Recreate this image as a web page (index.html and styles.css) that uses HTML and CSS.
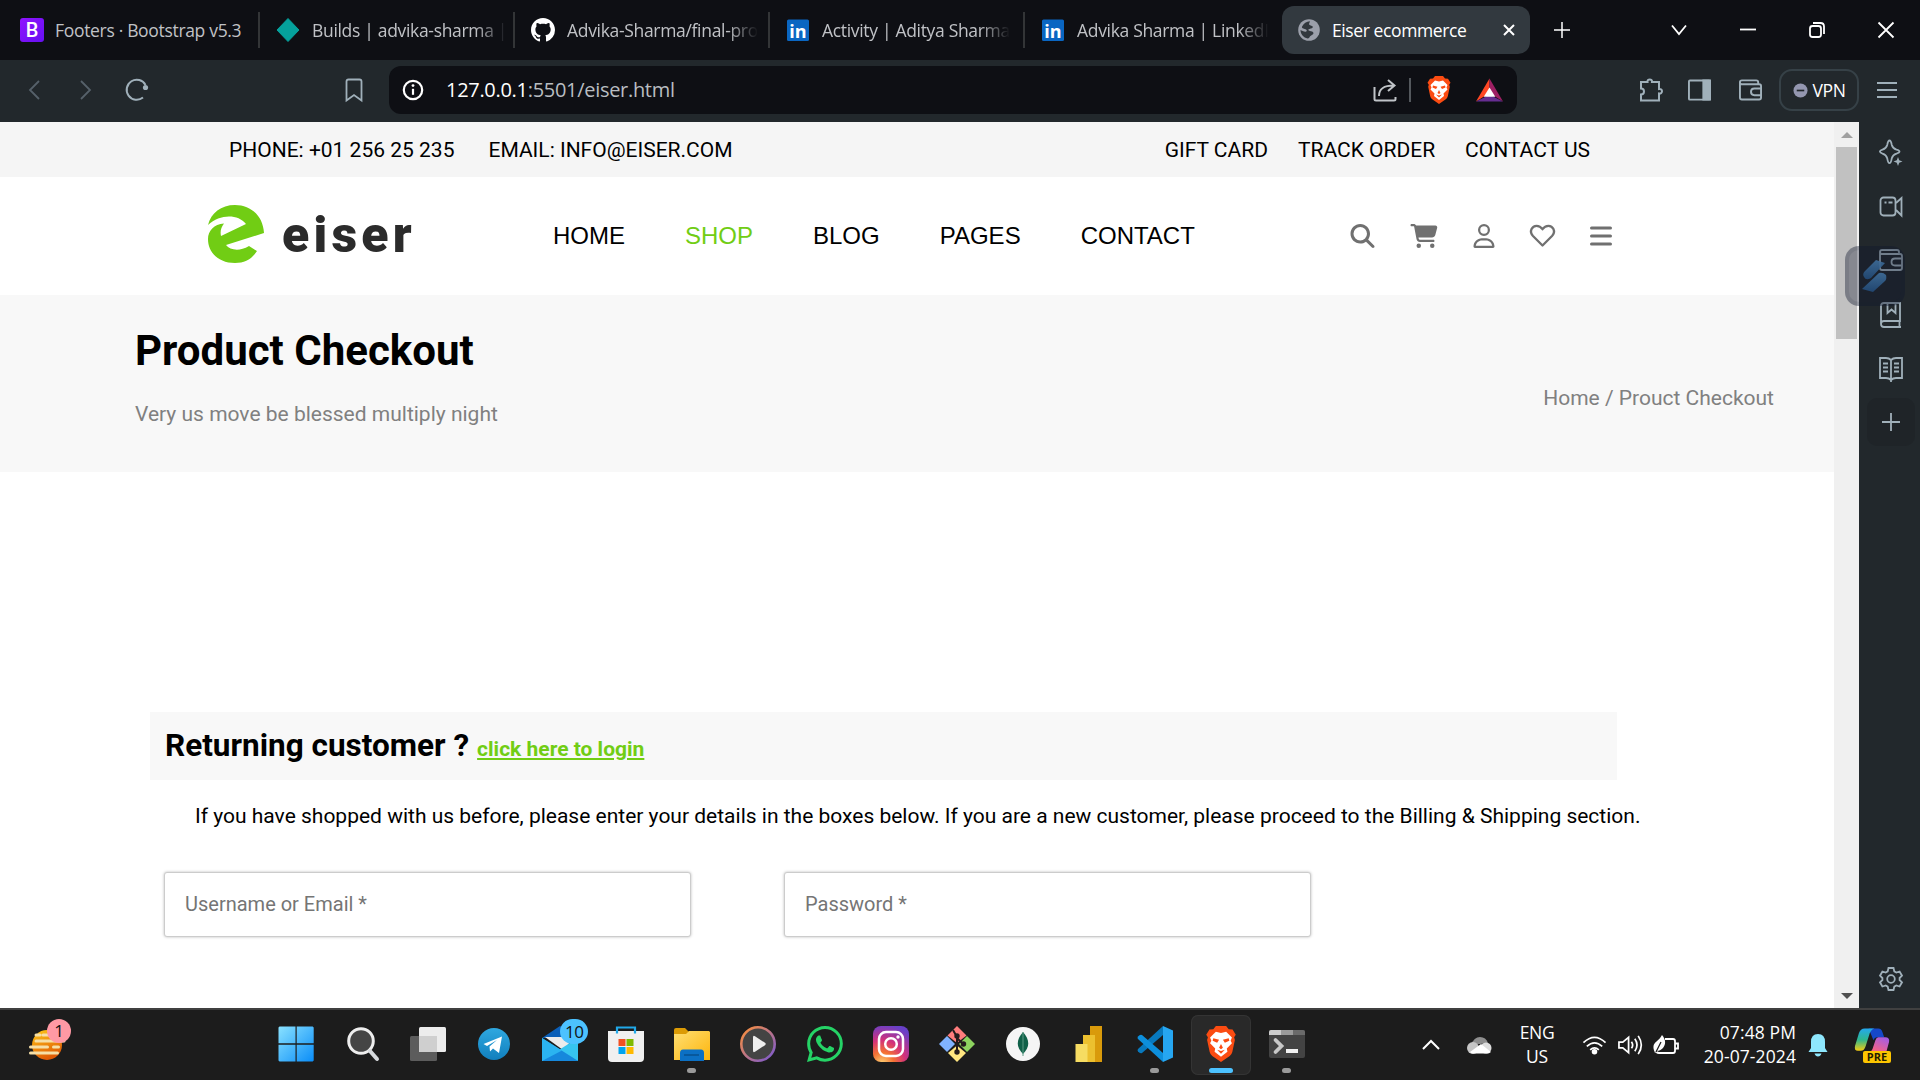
FILE: index.html
```html
<!DOCTYPE html>
<html lang="en">
<head>
<meta charset="utf-8">
<title>Eiser ecommerce</title>
<link rel="stylesheet" href="styles.css">
</head>
<body>
<div class="screen">
  <div class="tabs">
    <div class="tab"><svg class="fav" viewBox="0 0 24 24"><defs><linearGradient id="bs" x1="0" y1="0" x2="1" y2="1"><stop offset="0" stop-color="#9013fe"/><stop offset="1" stop-color="#6610f2"/></linearGradient></defs><rect width="24" height="24" rx="3" fill="url(#bs)"/><text class="bs-b" x="12" y="19" text-anchor="middle">B</text></svg><span class="tab-title">Footers · Bootstrap v5.3</span></div>
    <div class="tab"><svg class="fav" viewBox="0 0 24 24"><path d="M12 .5 23 12 12 23.500 1 12Z" fill="#05a19c" stroke="#05a19c" stroke-linejoin="round"/></svg><span class="tab-title fade">Builds | advika-sharma |</span></div>
    <div class="tab"><svg class="fav" viewBox="0 0 16 16"><path fill="#fff" d="M8 0C3.58 0 0 3.58 0 8c0 3.54 2.29 6.53 5.47 7.59.4.07.55-.17.55-.38 0-.19-.01-.82-.01-1.49-2.01.37-2.53-.49-2.69-.94-.09-.23-.48-.94-.82-1.13-.28-.15-.68-.52-.01-.53.63-.01 1.08.58 1.23.82.72 1.21 1.87.87 2.33.66.07-.52.28-.87.51-1.07-1.78-.2-3.64-.89-3.64-3.95 0-.87.31-1.59.82-2.15-.08-.2-.36-1.02.08-2.12 0 0 .67-.21 2.2.82.64-.18 1.32-.27 2-.27.68 0 1.36.09 2 .27 1.53-1.04 2.2-.82 2.2-.82.44 1.1.16 1.92.08 2.12.51.56.82 1.27.82 2.15 0 3.07-1.87 3.75-3.65 3.95.29.25.54.73.54 1.48 0 1.07-.01 1.93-.01 2.2 0 .21.15.46.55.38A8.013 8.013 0 0016 8c0-4.42-3.58-8-8-8z"/></svg><span class="tab-title fade">Advika-Sharma/final-pro</span></div>
    <div class="tab"><svg class="fav" viewBox="0 0 24 24"><rect x="1" y="1.500" width="22" height="21.500" rx="1.500" fill="#0a66c2"/><text class="li-in" x="12" y="19.500" text-anchor="middle">in</text></svg><span class="tab-title fade">Activity | Aditya Sharma</span></div>
    <div class="tab last"><svg class="fav" viewBox="0 0 24 24"><rect x="1" y="1.500" width="22" height="21.500" rx="1.500" fill="#0a66c2"/><text class="li-in" x="12" y="19.500" text-anchor="middle">in</text></svg><span class="tab-title fade">Advika Sharma | LinkedI</span></div>
    <div class="tab active"><svg class="globe" viewBox="0 0 22 22"><circle cx="11" cy="11" r="10.800" fill="#9b9faa"/><path d="M12 2.200c-.6 1.800-1.300 2.600-.7 3.600.8 1.100 3 .8 3.500 2 .4 1.200-1.600 1.900-3.300 2.100-1.700.1-1.200 1.400-.2 1.900 2 .6 4.300.9 4.200 2.400-.2 1.700-2.700 1.900-3.600 3.400-.5 1-.8 1.900-2.200 2-4.200-.8-7.200-4.300-7.200-8.500 1 .5 3.600 1.900 5.200 1.700 1.700-.2 1.300-2.100-.2-2.500-1.900-.4-4.200-1-3.400-2.700C5.500 4.200 8.500 2.300 12 2.200z" fill="#32383e"/></svg><span class="tab-title">Eiser ecommerce</span><svg class="tab-x" viewBox="0 0 14 14"><path d="M2 2l10 10M12 2L2 12"/></svg></div>
    <svg class="newtab" viewBox="0 0 18 18"><path d="M9 1v16M1 9h16"/></svg>
    <div class="winctl">
      <svg viewBox="0 0 18 18"><path d="M2 4.500l7 8.500 7-8.500"/></svg>
      <svg viewBox="0 0 18 18"><path d="M1 8.500h16"/></svg>
      <svg viewBox="0 0 18 18"><rect x="2" y="5" width="11" height="11" rx="2.500"/><path d="M5 2h7.500q3.500 0 3.500 3.500V13"/></svg>
      <svg viewBox="0 0 18 18"><path d="M1.500 1.500l15 15M16.500 1.500l-15 15"/></svg>
    </div>
  </div>

  <div class="toolbar">
    <svg class="tb back" viewBox="0 0 12 20"><path d="M11 1L2 10l9 9"/></svg>
    <svg class="tb fwd" viewBox="0 0 12 20"><path d="M1 1l9 9-9 9"/></svg>
    <svg class="tb reload" viewBox="0 0 24 24"><path d="M18 19.500A10 10 0 1 1 20.500 7"/><circle cx="20.500" cy="9.500" r="2.600" fill="#a0b0ba" stroke="none"/></svg>
    <svg class="tb mark" viewBox="0 0 18 24"><path d="M1.500 3.500q0-2 2-2h11q2 0 2 2v19L9 17l-7.500 5.500z"/></svg>
    <div class="url">
      <svg class="info" viewBox="0 0 22 22"><circle cx="11" cy="11" r="9.200"/><path d="M11 9.800v6"/><circle cx="11" cy="6.600" r="1.400" fill="#fff" stroke="none"/></svg>
      <span class="addr"><b>127.0.0.1</b>:5501/eiser.html</span>
      <svg class="share" viewBox="0 0 24 24"><path d="M1.500 9v12q0 1.500 1.500 1.500h18q1.500 0 1.500-1.500v-2"/><path d="M6 18c0-7 4-10.500 15-10.500M15 2l6.500 5.500L15 13"/></svg>
      <i class="bar"></i>
      <svg class="lion" viewBox="0 0 24 28"><use href="#lionshape"/></svg>
      <svg class="bat" viewBox="0 0 28 24"><path d="M14 0L0 24 14 15z" fill="#ff4724"/><path d="M14 0l14 24-14-9z" fill="#9e1f63"/><path d="M0 24h28l-14-7z" fill="#662d91"/><path d="M14 9.500L20 19H8z" fill="#fff"/></svg>
    </div>
    <div class="ext">
      <svg class="puz" viewBox="0 0 25 24"><path d="M2 4h6.500C8 .500 13.500.500 13 4H20v7c4-.6 4 5 0 4.500V22.500H2v-6c4 0 4-6 0-6z"/></svg>
      <svg class="side" viewBox="0 0 24 22"><rect x="1" y="1" width="22" height="20" rx="1"/><path d="M16 1h7v20h-7z" fill="#a0b0ba"/></svg>
      <svg class="wal" viewBox="0 0 24 22"><use href="#wallet"/></svg>
      <span class="vpn"><svg viewBox="0 0 16 16"><circle cx="8" cy="8" r="7.500" fill="#9497b0"/><path d="M4 8h8" stroke="#20262a" stroke-width="1.800"/></svg>VPN</span>
      <svg class="ham" viewBox="0 0 20 16"><path d="M0 1h20M0 8h20M0 15h20"/></svg>
    </div>
  </div>

  <div class="middle">
    <main class="page">
      <div class="topbar">
        <div class="info-links"><span>PHONE: +01 256 25 235</span><span>EMAIL: INFO@EISER.COM</span></div>
        <div class="help-links"><span>GIFT CARD</span><span>TRACK ORDER</span><span>CONTACT US</span></div>
      </div>
      <header class="nav">
        <svg class="logo-e" viewBox="0 0 56 58"><path fill="#71cd14" d="M0 20C3 8 13 0 27 0c16 0 28 11 29 28L18 40c4 5 13 7 23 1l8 5C44 54 37 58 27 58 11 58 0 48 0 34c0-8 6-15 16-15.500-3 4-4 8-3 12.500L38 19C30 9 12 9 0 20z"/></svg>
        <span class="logo-t">eiser</span>
        <nav class="links"><a>HOME</a><a class="on">SHOP</a><a>BLOG</a><a>PAGES</a><a>CONTACT</a></nav>
        <div class="acts">
          <svg class="a1" viewBox="0 0 512 512"><path d="M416 208c0 45.900-14.900 88.300-40 122.700L502.600 457.400c12.500 12.500 12.500 32.800 0 45.300s-32.800 12.500-45.300 0L330.700 376c-34.400 25.200-76.800 40-122.700 40C93.100 416 0 322.900 0 208S93.100 0 208 0S416 93.100 416 208zM208 352a144 144 0 1 0 0-288 144 144 0 1 0 0 288z"/></svg>
          <svg class="a2" viewBox="0 0 576 512"><path d="M0 24C0 10.700 10.700 0 24 0H69.500c22 0 41.500 12.800 50.600 32h411c26.300 0 45.500 25 38.600 50.400l-41 152.300c-8.500 31.400-37 53.300-69.500 53.300H170.700l5.400 28.500c2.200 11.300 12.100 19.500 23.600 19.500H488c13.300 0 24 10.700 24 24s-10.700 24-24 24H199.700c-34.600 0-64.300-24.600-70.700-58.500L77.400 54.500c-.7-3.800-4-6.500-7.900-6.500H24C10.700 48 0 37.300 0 24zM128 464a48 48 0 1 1 96 0 48 48 0 1 1 -96 0zm336-48a48 48 0 1 1 0 96 48 48 0 1 1 0-96z"/></svg>
          <svg class="a3" viewBox="0 0 448 512"><path d="M304 128a80 80 0 1 0 -160 0 80 80 0 1 0 160 0zM96 128a128 128 0 1 1 256 0A128 128 0 1 1 96 128zM49.300 464H398.700c-8.900-63.300-63.300-112-129-112H178.300c-65.700 0-120.100 48.700-129 112zM0 482.300C0 383.800 79.800 304 178.300 304h91.400C368.200 304 448 383.800 448 482.300c0 16.400-13.300 29.700-29.700 29.700H29.700C13.300 512 0 498.700 0 482.300z"/></svg>
          <svg class="a4" viewBox="0 0 25 24"><path d="M12.500 21.500L3 12C-1.500 7 2.500 1.800 6.500 1.800c3 0 4.700 1.500 6 3.400 1.300-1.900 3-3.400 6-3.400 4 0 8 5.200 3.500 10.200z" fill="none" stroke="#707070" stroke-width="2.300" stroke-linejoin="round"/></svg>
          <svg class="a5" viewBox="0 0 22 20"><path d="M1.500 2h19M1.500 10h19M1.500 18h19" stroke="#707070" stroke-width="3" stroke-linecap="round"/></svg>
        </div>
      </header>
      <section class="banner">
        <div><h1>Product Checkout</h1><p>Very us move be blessed multiply night</p></div>
        <span class="crumb">Home / Prouct Checkout</span>
      </section>
      <section class="checkout">
        <div class="returning"><h2>Returning customer ?</h2><a>click here to login</a></div>
        <p class="note">If you have shopped with us before, please enter your details in the boxes below. If you are a new customer, please proceed to the Billing &amp; Shipping section.</p>
        <form class="fields"><input placeholder="Username or Email *"><input placeholder="Password *"></form>
      </section>
    </main>
    <div class="scroll"><i class="up"></i><i class="thumb"></i><i class="down"></i></div>
    <aside class="rail">
      <svg viewBox="0 0 24 28"><path d="M10.500 1.500c1.500 0 1.700 1.400 2.300 4.500.7 2.800 1.700 3.700 4.700 4.600 4 1.100 4 2.800 0 4-3 .8-4 1.800-4.700 4.600-.6 3.400-.8 5-2.300 5s-1.700-1.600-2.300-5c-.7-2.800-1.700-3.800-4.700-4.600-3.500-1.200-3.500-2.900 0-4 3-.9 4-1.800 4.700-4.600.6-3.100.8-4.500 2.300-4.500z"/><path d="M19 18l1.200 3.300 3.300 1.200-3.300 1.200L19 27l-1.200-3.300-3.300-1.200 3.300-1.200z" fill="#a0b0ba" stroke="none"/></svg>
      <svg viewBox="0 0 24 28"><rect x="1.500" y="4.500" width="15" height="18" rx="3"/><path d="M17 10l5.500-5v17.500L17 17"/><path d="M5.500 9.500h2m2 0h4"/></svg>
      <svg viewBox="0 0 24 28"><g id="wallet" transform="translate(0 2)"><path d="M1 2.500V19q0 2 2 2h18q2 0 2-2V7q0-2-2-2H3Q1 5 1 3q0-2 2-2h15q2 0 2 2v2"/><path d="M23 9.500h-7q-3.500 0-3.500 3.500t3.500 3.500h7"/></g></svg>
      <svg viewBox="0 0 24 28"><path d="M22 26H5q-3 0-3-3V5q0-3 3-3h16v18H5q-3 0-3 3M20.500 20v6M8.500 2v10l4-3.500 4 3.500V2"/></svg>
      <svg viewBox="0 0 24 28"><path d="M12 5q-2-2-5-2H1v20h6q3 0 5 2 2-2 5-2h6V3h-6q-3 0-5 2zM12 5v22M4 8.500h5m-5 4h5m-5 4h5m6-8h5m-5 4h5m-5 4h5"/></svg>
      <span class="add"><svg viewBox="0 0 24 28"><path d="M12 5v18M3 14h18"/></svg></span>
      <svg class="gear" viewBox="0 0 24 28"><path d="M9.500 3h5l.8 3.300 2 1.200 3.300-1 2.400 4.200-2.400 2.300v2l2.400 2.300-2.400 4.200-3.300-1-2 1.200-.8 3.300h-5l-.8-3.300-2-1.200-3.300 1L1 17.300 3.400 15v-2L1 10.700l2.400-4.200 3.300 1 2-1.200z"/><circle cx="12" cy="14" r="3.800"/></svg>
      <div class="float"><svg viewBox="0 0 26 34"><defs><linearGradient id="fl" x1="0" y1="0" x2="0" y2="1"><stop offset="0" stop-color="#406f9c"/><stop offset="1" stop-color="#224a77"/></linearGradient></defs><path d="M14 1l9 3L9 19q-5 3-7-1-2-3 1-6z" fill="url(#fl)"/><path d="M17 14q4-1 7 2 1 4-1 6L11 33 0 30z" fill="url(#fl)"/></svg></div>
    </aside>
  </div>

  <footer class="task">
    <div class="weather"><svg viewBox="0 0 38 32"><defs><linearGradient id="sun" x1="0" y1="0" x2=".4" y2="1"><stop offset="0" stop-color="#ffca18"/><stop offset="1" stop-color="#e05a04"/></linearGradient></defs><circle cx="18" cy="16" r="15" fill="url(#sun)"/><path d="M7 6h4m3 0h10M7 12h28M1.500 18h17m6 0h5M1.500 24h27" stroke="#f6dfa6" stroke-width="3" stroke-linecap="round"/></svg><b>1</b></div>
    <div class="apps">
      <div class="app"><svg viewBox="0 0 36 36"><defs><linearGradient id="w" x1="0" y1="0" x2="1" y2="1"><stop offset="0" stop-color="#8ae2ff"/><stop offset="1" stop-color="#0a8df8"/></linearGradient></defs><path fill="url(#w)" d="M1.500.500h16v16.800H.500V1.500zM18.700.500h16l1 1v15.800h-17zM.500 18.700h17v16.800h-16l-1-1zM18.700 18.700h17v15.800l-1 1h-16z"/></svg></div>
      <div class="app"><svg viewBox="0 0 36 36"><circle cx="17" cy="15" r="12.300" fill="#454545" stroke="#eee" stroke-width="3"/><path d="M26 25l7 8" stroke="#d7dade" stroke-width="4" stroke-linecap="round"/></svg></div>
      <div class="app"><svg viewBox="0 0 36 36"><rect y="10" width="27" height="25" rx="1.500" fill="#5c5c5c"/><rect x="9" y="1" width="27" height="25" rx="1.500" fill="#ececec"/><path d="M9 10h18v16H9z" fill="#cfcfcf"/></svg></div>
      <div class="app"><svg viewBox="0 0 36 36"><defs><linearGradient id="tg" x2="0" y2="1"><stop stop-color="#2fa8e0"/><stop offset="1" stop-color="#117fbd"/></linearGradient></defs><circle cx="18" cy="18" r="16" fill="url(#tg)"/><path d="M7.500 18L26 10.500 23 27l-6-4.500-3 3-.5-5L21 14l-10 6z" fill="#fff"/></svg></div>
      <div class="app"><svg viewBox="0 0 36 36"><path d="M0 12L18 0l18 12H0z" fill="#0a5fb8"/><path d="M3 11h30l-12 13z" fill="#ececec"/><path d="M36 12L12 27l24 8z" fill="#36c5f0"/><path d="M0 12l36 23H0z" fill="#26a9ec"/><path d="M36 35H0l17-12z" fill="#1688dc"/><path d="M0 12l20 12.500L0 35z" fill="#2bb4f0"/></svg><b>10</b></div>
      <div class="app"><svg viewBox="0 0 36 36"><path d="M0 5h36v27q0 4-4 4H4q-4 0-4-4z" fill="#f0f0f0"/><path d="M9 7.500V1.500h18v6" fill="none" stroke="#20a8e8" stroke-width="2.200"/><path fill="#f25022" d="M10.500 13h7v7h-7z"/><path fill="#7fba00" d="M18.500 13h7v7h-7z"/><path fill="#00a4ef" d="M10.500 21h7v7h-7z"/><path fill="#ffb900" d="M18.500 21h7v7h-7z"/></svg></div>
      <div class="app run"><svg viewBox="0 0 36 36"><defs><linearGradient id="fo" x2="1" y2="1"><stop stop-color="#ffdf73"/><stop offset="1" stop-color="#fdb50c"/></linearGradient></defs><path d="M0 4q0-2 2-2h9l4 4v6H0z" fill="#dc9b05"/><path d="M0 8h12l3-3h20l1 1v28H0z" fill="url(#fo)"/><path d="M6 35V27q0-3.500 3-3.500h18q3 0 3 3.500v8z" fill="#0c70c4"/><path d="M10 29h15" stroke="#07508f" stroke-width="1.500"/></svg></div>
      <div class="app"><svg viewBox="0 0 36 36"><defs><linearGradient id="mp" x2="1" y2="1"><stop stop-color="#ff9138"/><stop offset="1" stop-color="#7657d6"/></linearGradient></defs><circle cx="18" cy="18" r="16.700" fill="#444" stroke="url(#mp)" stroke-width="2.600"/><path d="M13 11.500q0-2.500 2-1.200L25 16.800q1.500 1.200 0 2.400L15 25.700q-2 1.300-2-1.200z" fill="#eee"/></svg></div>
      <div class="app"><svg viewBox="0 0 16 16"><path fill="#25d366" d="M13.601 2.326A7.850 7.850 0 0 0 7.994 0C3.627 0 .068 3.558.064 7.926c0 1.399.366 2.760 1.057 3.965L0 16l4.204-1.102a7.900 7.900 0 0 0 3.790.965h.004c4.368 0 7.926-3.558 7.930-7.930A7.900 7.900 0 0 0 13.600 2.326zM7.994 14.521a6.600 6.600 0 0 1-3.356-.92l-.24-.144-2.494.654.666-2.433-.156-.251a6.560 6.560 0 0 1-1.007-3.505c0-3.626 2.957-6.584 6.591-6.584a6.560 6.560 0 0 1 4.660 1.931 6.560 6.560 0 0 1 1.928 4.660c-.004 3.639-2.961 6.592-6.592 6.592m3.615-4.934c-.197-.099-1.170-.578-1.353-.646-.182-.065-.315-.099-.445.099-.133.197-.513.646-.627.775-.114.133-.232.148-.43.050-.197-.1-.836-.308-1.592-.985-.59-.525-.985-1.175-1.103-1.372-.114-.198-.011-.304.088-.403.087-.088.197-.232.296-.346.1-.114.133-.198.198-.33.065-.134.034-.248-.015-.347-.05-.099-.445-1.076-.612-1.470-.16-.389-.323-.335-.445-.34-.114-.007-.247-.007-.38-.007a.730.730 0 0 0-.529.247c-.182.198-.691.677-.691 1.654s.71 1.916.81 2.049c.098.133 1.394 2.132 3.383 2.992.47.205.84.326 1.129.418.475.152.904.129 1.246.08.38-.058 1.171-.48 1.338-.943.164-.464.164-.86.114-.943-.049-.084-.182-.133-.38-.232"/></svg></div>
      <div class="app"><svg viewBox="0 0 36 36"><defs><radialGradient id="ig" cx=".25" cy="1.050" r="1.100"><stop stop-color="#fed576"/><stop offset=".3" stop-color="#f47133"/><stop offset=".6" stop-color="#d3317b"/><stop offset="1" stop-color="#6940c8"/></radialGradient></defs><rect width="36" height="36" rx="8" fill="url(#ig)"/><g fill="none" stroke="#fff" stroke-width="2.500"><rect x="6" y="6" width="24" height="24" rx="7"/><circle cx="18" cy="18" r="5.800"/></g><circle cx="25" cy="11" r="1.700" fill="#fff"/></svg></div>
      <div class="app"><svg viewBox="0 0 36 36"><path d="M18 0l9.500 9.500L18 17l-9.500-7.500z" fill="#ff7d7d"/><path d="M0 18l8-8 8 8-8 8z" fill="#80b3ff"/><path d="M36 18l-8-8-8 8 8 8z" fill="#8dd35f"/><path d="M18 36l-9-9 9-7.500 9 7.500z" fill="#ffe680"/><path d="M14 4l4 7v14M18 12l6 6" stroke="#241c1c" stroke-width="2" fill="none"/><g fill="#241c1c"><circle cx="18" cy="10" r="2.700"/><circle cx="18" cy="26" r="2.700"/><circle cx="24.500" cy="18" r="2.700"/></g></svg></div>
      <div class="app"><svg viewBox="0 0 36 36"><circle cx="18" cy="18" r="17" fill="#f5f5f5"/><path d="M18 6c-7 8-7 15 0 22 7-7 7-14 0-22z" fill="#116149"/><path d="M18 6v24" stroke="#5d9c85" stroke-width="1"/></svg></div>
      <div class="app"><svg viewBox="0 0 36 36"><path d="M19 0h12v36H19z" fill="#d99a0b"/><path d="M12 9h12v27H12z" fill="#ecc02f"/><path d="M4.500 18h12v18h-12z" fill="#f6dc62"/></svg></div>
      <div class="app run"><svg viewBox="0 0 36 36"><path d="M1 23l25-23v9L5 27q-2 1-4-1.500-1-1.500 0-2.500z" fill="#0879be"/><path d="M1 13l25 23v-9L5 9q-2-1-4 1.500-1 1.500 0 2.500z" fill="#0d8fdc"/><path d="M26 0l10 4.500v27L26 36z" fill="#26a6f1"/></svg></div>
      <div class="app current"><svg viewBox="0 0 24 28"><g id="lionshape"><path d="M8 0h8l2 2.500 3 .3 2.500 4-1.300 2 .6 2-2 9.500q-.5 2-2 3L12 28l-6.800-4.700q-1.500-1-2-3l-2-9.500.6-2-1.300-2L3 2.800l3-.3z" fill="#fb4c12"/><path d="M12 5.500l4-1L20.500 9l-1 2.500 1 2-4 4 .5 2.500L12 24l-5-4 .5-2.500-4-4 1-2-1-2.500L8 4.500z" fill="#fff"/><path d="M6 9.500l4.500 1.200L9 13 5.500 11.500zM18 9.500l-4.500 1.200L15 13l3.500-1.500zM12 14l1.500 3L12 18l-1.500-1zM9 18.500l3 1 3-1-3 3z" fill="#fb4c12"/></g></svg></div>
      <div class="app run"><svg viewBox="0 0 36 36"><rect y="4" width="36" height="28" rx="2" fill="#434343"/><path d="M0 9V6q0-2 2-2h10v5z" fill="#ccc"/><path d="M12 4h12v5H12z" fill="#9b9b9b"/><path d="M24 4h10q2 0 2 2v3H24z" fill="#6a6a6a"/><path d="M6.500 14l6 6-6 6" fill="none" stroke="#c8c8c8" stroke-width="3.800" stroke-linecap="round"/><rect x="17" y="23" width="12" height="4" fill="#f2f2f2"/></svg></div>
    </div>
    <div class="tray">
      <svg class="chev" viewBox="0 0 18 12"><path d="M1 10l8-8 8 8"/></svg>
      <svg class="cloud" viewBox="0 0 25 18"><path d="M4 9Q7 1 13 1q6 0 8 6z" fill="#8f8f8f"/><circle cx="6" cy="12" r="6" fill="#c6c6c6"/><circle cx="19" cy="12" r="5.500" fill="#dedede"/><path d="M3 16L14 8l10 8q-2 1.500-4 1.500H6q-2 0-3-1.500z" fill="#fff"/></svg>
      <span class="lang">ENG<br>US</span>
      <svg class="wifi" viewBox="0 0 26 20"><path d="M1.500 7.500q11.500-11 23 0M5 11.500q8-7.500 16 0M8.500 15q4.500-4 9 0"/><circle cx="13" cy="17" r="2" fill="#fff"/></svg>
      <svg class="vol" viewBox="0 0 26 22"><path d="M1 8v6h4l6 5V3L5 8zM14 7.500q2.500 3.500 0 7M17.500 4.500q4.500 6.500 0 13M21 1.500q6.500 9.500 0 19"/></svg>
      <svg class="batt" viewBox="0 0 27 22"><path d="M12 5h8q2 0 2 2v10q0 2-2 2H6q-3 0-3-3M22.500 9.500H25v5h-2.500"/><path d="M9 1c4 5 4 9 1 13-2 2-4 3-6 3L2 19c-.5-2-2-4-1.500-7C1 8 6 7 9 1z" fill="#fff" stroke="none"/><path d="M3 18L8 8" stroke="#1c1c1c" stroke-width="1.200"/></svg>
      <span class="clock">07:48 PM<br>20-07-2024</span>
      <svg class="bell" viewBox="0 0 20 24"><path d="M10 1q7 0 7 8v6l2.500 4H.500L3 15V9q0-8 7-8zM6.500 20.500h7q-1 3-3.500 3t-3.500-3z" fill="#8ee7fd"/></svg>
      <div class="pilot"><svg viewBox="0 0 36 34"><defs><linearGradient id="c1" x2="0" y2="1"><stop stop-color="#24a8ee"/><stop offset=".5" stop-color="#2eb78f"/><stop offset="1" stop-color="#f6cb10"/></linearGradient><linearGradient id="c2" x1="1" x2=".4" y2="1"><stop stop-color="#9a5cf0"/><stop offset="1" stop-color="#fb637d"/></linearGradient></defs><path d="M14 0h10q3 0 4 3l2 6h-7q-3 0-4 3z" fill="#1648c8"/><path d="M10 0h10q-4 1-5.500 7L11 18q-1.500 5-5 5H3q-4 0-3-5L4 5q1.500-5 6-5z" fill="url(#c1)"/><path d="M24 9h7q5 0 4 5l-3 11H14q3-1 4-4l3-9q1-3 3-3z" fill="url(#c2)"/></svg><b>PRE</b></div>
    </div>
  </footer>
</div>
</body>
</html>
```
FILE: styles.css
```css
* { box-sizing: border-box; }
body { margin: 0; font-family: Roboto, sans-serif; }
svg { display: block; flex: none; overflow: visible; }
.screen { width: 1920px; height: 1080px; display: flex; flex-direction: column; overflow: hidden; }

/* tab strip */
.tabs { height: 60px; background: #0e0f14; display: flex; align-items: center; padding-left: 5px; font: 17.500px "Open Sans", sans-serif; color: #c0c2c6; }
.tab { width: 255px; height: 36px; padding: 0 14px 0 16px; display: flex; align-items: center; border-right: 2px solid #333537; flex: none; }
.tab.last { border-right-color: transparent; }
.fav { width: 24px; height: 24px; margin-right: 11px; margin-left: -1px; }
.tab + .tab .fav { margin-right: 12px; margin-left: 0; }
.tab-title { white-space: nowrap; flex: 1; letter-spacing: -.32px; line-height: 30px; margin-top: -1px; }
.fade { -webkit-mask-image: linear-gradient(90deg, #000 84%, transparent); mask-image: linear-gradient(90deg, #000 84%, transparent); }
.bs-b { font: 500 20px Roboto, sans-serif; fill: #fff; }
.li-in { font: 700 18px "Open Sans", sans-serif; fill: #fff; }
.tab.active { width: 248px; height: 48px; margin-left: 2px; border: 0; border-radius: 12px; background: #32393f; color: #fff; padding: 0 14px 0 16px; }
.globe { width: 22px; height: 22px; margin-right: 12px; }
.active .tab-title { letter-spacing: -.4px; }
.tab-x { width: 14px; height: 14px; fill: none; stroke: #fff; stroke-width: 2; }
.newtab { width: 18px; height: 18px; margin-left: 23px; stroke: #fff; stroke-width: 1.500; fill: none; }
.winctl { display: flex; gap: 51px; margin-left: auto; margin-right: 25px; }
.winctl svg { width: 18px; height: 18px; fill: none; stroke: #fff; stroke-width: 1.800; }

/* toolbar */
.toolbar { height: 62px; background: #22282c; display: flex; align-items: center; padding: 0 23px 2px 28px; }
.tb { fill: none; stroke: #a0b0ba; stroke-width: 1.800; }
.back, .fwd { width: 12px; height: 20px; stroke: #56616a; }
.fwd { margin-left: 40px; }
.reload { width: 24px; height: 24px; margin-left: 33px; stroke-width: 2; }
.mark { width: 18px; height: 24px; margin-left: 196px; }
.url { width: 1128px; height: 48px; margin-left: 26px; border-radius: 12px; background: #0e0f14; display: flex; align-items: center; padding: 0 14px 0 13px; }
.info { width: 22px; height: 22px; fill: none; stroke: #fff; stroke-width: 2.200; }
.addr { margin: -1px 0 0 22px; font: 20px "Open Sans", sans-serif; letter-spacing: -.3px; color: #b9bdc1; }
.addr b { font-weight: 400; color: #fff; }
.share { width: 24px; height: 24px; margin-left: auto; fill: none; stroke: #c0c4c8; stroke-width: 2; }
.bar { width: 2px; height: 24px; background: #54585d; margin: 0 16px 0 12px; }
.lion { width: 24px; height: 28px; }
.bat { width: 27px; height: 24px; margin-left: 25px; }
.ext { display: flex; align-items: center; margin-left: auto; }
.ext > svg { fill: none; stroke: #a0b0ba; stroke-width: 2; }
.puz { width: 25px; height: 24px; margin-right: 24px; }
.side, .wal { width: 23px; height: 22px; margin-right: 28px; }
.wal { margin-right: 17px; margin-top: -4px; }
.vpn { width: 80px; height: 42px; border: 2px solid #364147; border-radius: 13px; display: flex; align-items: center; justify-content: center; gap: 5px; color: #fff; font: 17.500px "Open Sans", sans-serif; letter-spacing: -.4px; margin-right: 18px; }
.vpn svg { width: 15px; height: 15px; }
.ham { width: 20px; height: 16px; }

/* web page */
.middle { height: 886px; display: flex; }
.page { width: 1834px; background: #fff; overflow: hidden; color: #000; }
.topbar { height: 55px; background: #f5f5f5; display: flex; align-items: center; justify-content: space-between; padding: 0 244px 0 229px; font-size: 21px; }
.info-links { display: flex; gap: 34px; }
.help-links { display: flex; gap: 30px; }
.nav { height: 118px; display: flex; align-items: center; padding-left: 208px; }
.logo-e { width: 56px; height: 58px; margin-top: -4px; }
.logo-t { width: 138px; margin: -2px 0 0 18px; font-size: 50px; font-weight: 900; line-height: 60px; letter-spacing: 4.200px; color: #2b2b2b; }
.links { display: flex; gap: 60px; margin-left: 133px; font: 24px "Liberation Sans", sans-serif; white-space: nowrap; }
.on { color: #71cd14; }
.acts { display: flex; align-items: center; margin-left: auto; padding-right: 222px; }
.acts svg { fill: #707070; height: 24px; }
.a1 { width: 25px; margin-right: 35px; }
.a2 { width: 28px; margin-right: 35px; }
.a3 { width: 22px; margin-right: 35px; }
.a4 { width: 25px; margin-right: 35px; }
.acts .a5 { width: 22px; height: 20px; }
.banner { height: 177px; background: #f8f8f8; display: flex; justify-content: space-between; padding: 30px 60px 0 135px; font-size: 21px; color: #808080; }
.banner h1 { margin: 0; font-size: 42px; font-weight: 700; line-height: 52px; color: #000; }
.banner p { margin: 25px 0 0; line-height: 24px; }
.crumb { line-height: 24px; padding-top: 61px; }
.checkout { padding: 240px 0 0 150px; }
.returning { width: 1467px; height: 68px; background: #f8f8f8; padding: 14px 15px; display: flex; align-items: baseline; gap: 8px; }
.returning h2 { margin: 0; font-size: 31.500px; line-height: 40px; font-weight: 700; }
.returning a { color: #71cd14; font-size: 21px; font-weight: 700; text-decoration: underline; }
.note { margin: 24px 0 0 45px; font-size: 21px; line-height: 24px; white-space: nowrap; }
.fields { display: flex; gap: 93px; margin: 44px 0 0 14px; }
.fields input { width: 527px; height: 65px; border: 1px solid #ccc; border-radius: 3px; box-shadow: 0 0 3px #bbb; padding: 0 20px 1px; font: 20px Roboto, sans-serif; outline: none; }
.fields input::placeholder { color: #757575; }

.scroll { width: 25px; background: #f0f0f0; display: flex; flex-direction: column; align-items: center; }
.up { border: 6px solid transparent; border-top: 0; border-bottom: 6px solid #a0a0a0; margin: 10px 0 9px; }
.thumb { width: 21px; height: 192px; background: #c1c1c1; }
.down { border: 6px solid transparent; border-bottom: 0; border-top: 6px solid #505050; margin: auto 0 9px; }

/* browser side rail */
.rail { width: 61px; background: #22282c; display: flex; flex-direction: column; align-items: center; padding: 17px 0 15px 3px; position: relative; }
.rail > svg, .add svg { width: 24px; height: 28px; margin-bottom: 26px; fill: none; stroke: #a0b0ba; stroke-width: 1.800; }
.rail .add { width: 48px; height: 48px; margin-top: -11px; border-radius: 10px; background: #1f2428; display: grid; place-items: center; }
.rail .add svg { margin: 0; }
.rail .gear { margin: auto 0 0; }
.float { position: absolute; left: -14px; top: 124px; width: 60px; height: 60px; border: 4px solid rgba(20, 26, 50, .1); border-radius: 14px; background: rgba(15, 20, 45, .33); padding: 9px 0 0 13px; }
.float svg { width: 26px; height: 34px; opacity: .9; }

/* taskbar */
.task { height: 72px; background: #1c1c1c; border-top: 2px solid #404040; display: flex; align-items: center; color: #fff; }
.weather { width: 38px; margin-left: 29px; position: relative; }
.weather svg { width: 38px; height: 32px; }
.weather b { position: absolute; left: 18px; top: -10px; width: 24px; height: 24px; border-radius: 50%; background: #ff99a4; color: #111; font: 17px/24px "Open Sans", sans-serif; text-align: center; }
.apps { display: flex; margin-left: 199px; gap: 6px; }
.app { width: 60.070px; height: 60px; display: grid; place-items: center; position: relative; border-radius: 7px; }
.app svg { width: 36px; height: 36px; margin-top: -3px; }
.app b { position: absolute; left: 30px; top: 4px; width: 28px; height: 25px; border-radius: 14px; background: #4cc2ff; color: #111; font: 17px/25px "Open Sans", sans-serif; letter-spacing: -.5px; text-align: center; }
.run::after, .current::after { content: ""; position: absolute; bottom: 2px; left: 25px; width: 9px; height: 5px; border-radius: 3px; background: #9a9a9a; }
.current { background: #292929; box-shadow: inset 0 0 0 1px #343434; }
.current::after { left: 18px; width: 24px; background: #4cc2ff; }
.tray { display: flex; align-items: center; margin-left: auto; padding-right: 29px; font: 17.500px/24px "Open Sans", sans-serif; letter-spacing: -.3px; }
.tray > svg { fill: none; stroke: #fff; stroke-width: 1.800; }
.tray .chev { width: 18px; height: 12px; margin-right: 27px; stroke-width: 2; }
.tray .cloud { width: 25px; height: 18px; stroke: none; margin-right: 27px; }
.lang { text-align: center; width: 36px; margin-right: 27px; margin-top: -2px; }
.wifi { width: 25px; height: 20px; margin-right: 11px; }
.vol { width: 25px; height: 22px; margin-right: 10px; }
.batt { width: 27px; height: 22px; }
.clock { text-align: right; width: 100px; margin: -2px 12px 0 16px; white-space: nowrap; letter-spacing: .1px; }
.tray .bell { width: 20px; height: 24px; margin-right: 27px; stroke: none; }
.pilot { width: 36px; height: 35px; position: relative; }
.pilot svg { width: 35px; height: 34px; }
.pilot b { position: absolute; left: 8px; top: 23px; width: 28px; height: 12px; border-radius: 2px; background: #fdc500; color: #241d00; font: 700 11px/12px "Open Sans", sans-serif; letter-spacing: 0; text-align: center; }
```
